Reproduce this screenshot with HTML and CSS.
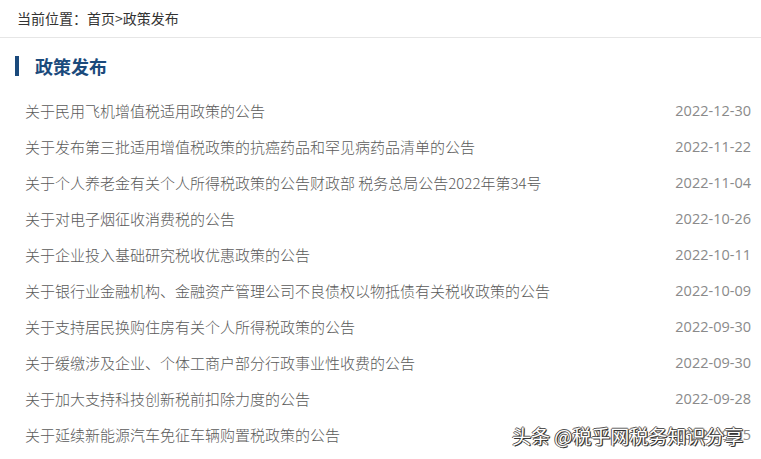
FILE: index.html
```html
<!DOCTYPE html>
<html lang="zh-CN">
<head>
<meta charset="utf-8">
<link rel="stylesheet" href="styles.css">
</head>
<body>
<div class="crumb">当前位置：首页&gt;政策发布</div>
<div class="section">
  <h2 class="title"><span class="bar"></span>政策发布</h2>
  <ul class="list">
    <li class="row"><span class="name">关于民用飞机增值税适用政策的公告</span><span class="date">2022-12-30</span></li>
    <li class="row"><span class="name">关于发布第三批适用增值税政策的抗癌药品和罕见病药品清单的公告</span><span class="date">2022-11-22</span></li>
    <li class="row"><span class="name">关于个人养老金有关个人所得税政策的公告财政部 税务总局公告2022年第34号</span><span class="date">2022-11-04</span></li>
    <li class="row"><span class="name">关于对电子烟征收消费税的公告</span><span class="date">2022-10-26</span></li>
    <li class="row"><span class="name">关于企业投入基础研究税收优惠政策的公告</span><span class="date">2022-10-11</span></li>
    <li class="row"><span class="name">关于银行业金融机构、金融资产管理公司不良债权以物抵债有关税收政策的公告</span><span class="date">2022-10-09</span></li>
    <li class="row"><span class="name">关于支持居民换购住房有关个人所得税政策的公告</span><span class="date">2022-09-30</span></li>
    <li class="row"><span class="name">关于缓缴涉及企业、个体工商户部分行政事业性收费的公告</span><span class="date">2022-09-30</span></li>
    <li class="row"><span class="name">关于加大支持科技创新税前扣除力度的公告</span><span class="date">2022-09-28</span></li>
    <li class="row"><span class="name">关于延续新能源汽车免征车辆购置税政策的公告</span><span class="date">2022-09-05</span></li>
  </ul>
</div>
<div class="watermark">头条 @税乎网税务知识分享</div>
</body>
</html>
```
FILE: styles.css
```css
html, body {
  margin: 0;
  padding: 0;
  background: #fff;
}
body {
  width: 761px;
  height: 459px;
  overflow: hidden;
  position: relative;
  font-family: "Noto Sans CJK SC", "Noto Sans", sans-serif;
}
.crumb {
  height: 37px;
  line-height: 36px;
  padding-left: 17px;
  font-size: 14px;
  color: #333;
  border-bottom: 1px solid #e6e6e6;
}
.section {
  padding-top: 10px;
}
.title {
  display: flex;
  align-items: center;
  height: 36px;
  margin: 0;
  padding-left: 15px;
  font-size: 18px;
  font-weight: bold;
  color: #1b4a7c;
}
.bar {
  display: block;
  width: 4px;
  height: 20px;
  background: #1b4a7c;
  margin-right: 16px;
}
.list {
  list-style: none;
  margin: 8px 0 0;
  padding: 0;
}
.row {
  display: flex;
  justify-content: space-between;
  align-items: center;
  height: 36px;
  padding: 0 10px 0 25px;
  font-size: 15px;
}
.name {
  color: #5a5a5a;
  font-weight: 300;
}
.date {
  color: #8a8a8a;
  font-family: "Open Sans", "Noto Sans", sans-serif;
  font-size: 14.5px;
}
.watermark {
  position: absolute;
  left: 512px;
  top: 422px;
  font-size: 19px;
  line-height: 28px;
  color: #fff;
  text-shadow: 1px 1px 0 #333, -1px 0 0 #555, 0 -1px 0 #555, 1px 0 1px #333;
}
```
